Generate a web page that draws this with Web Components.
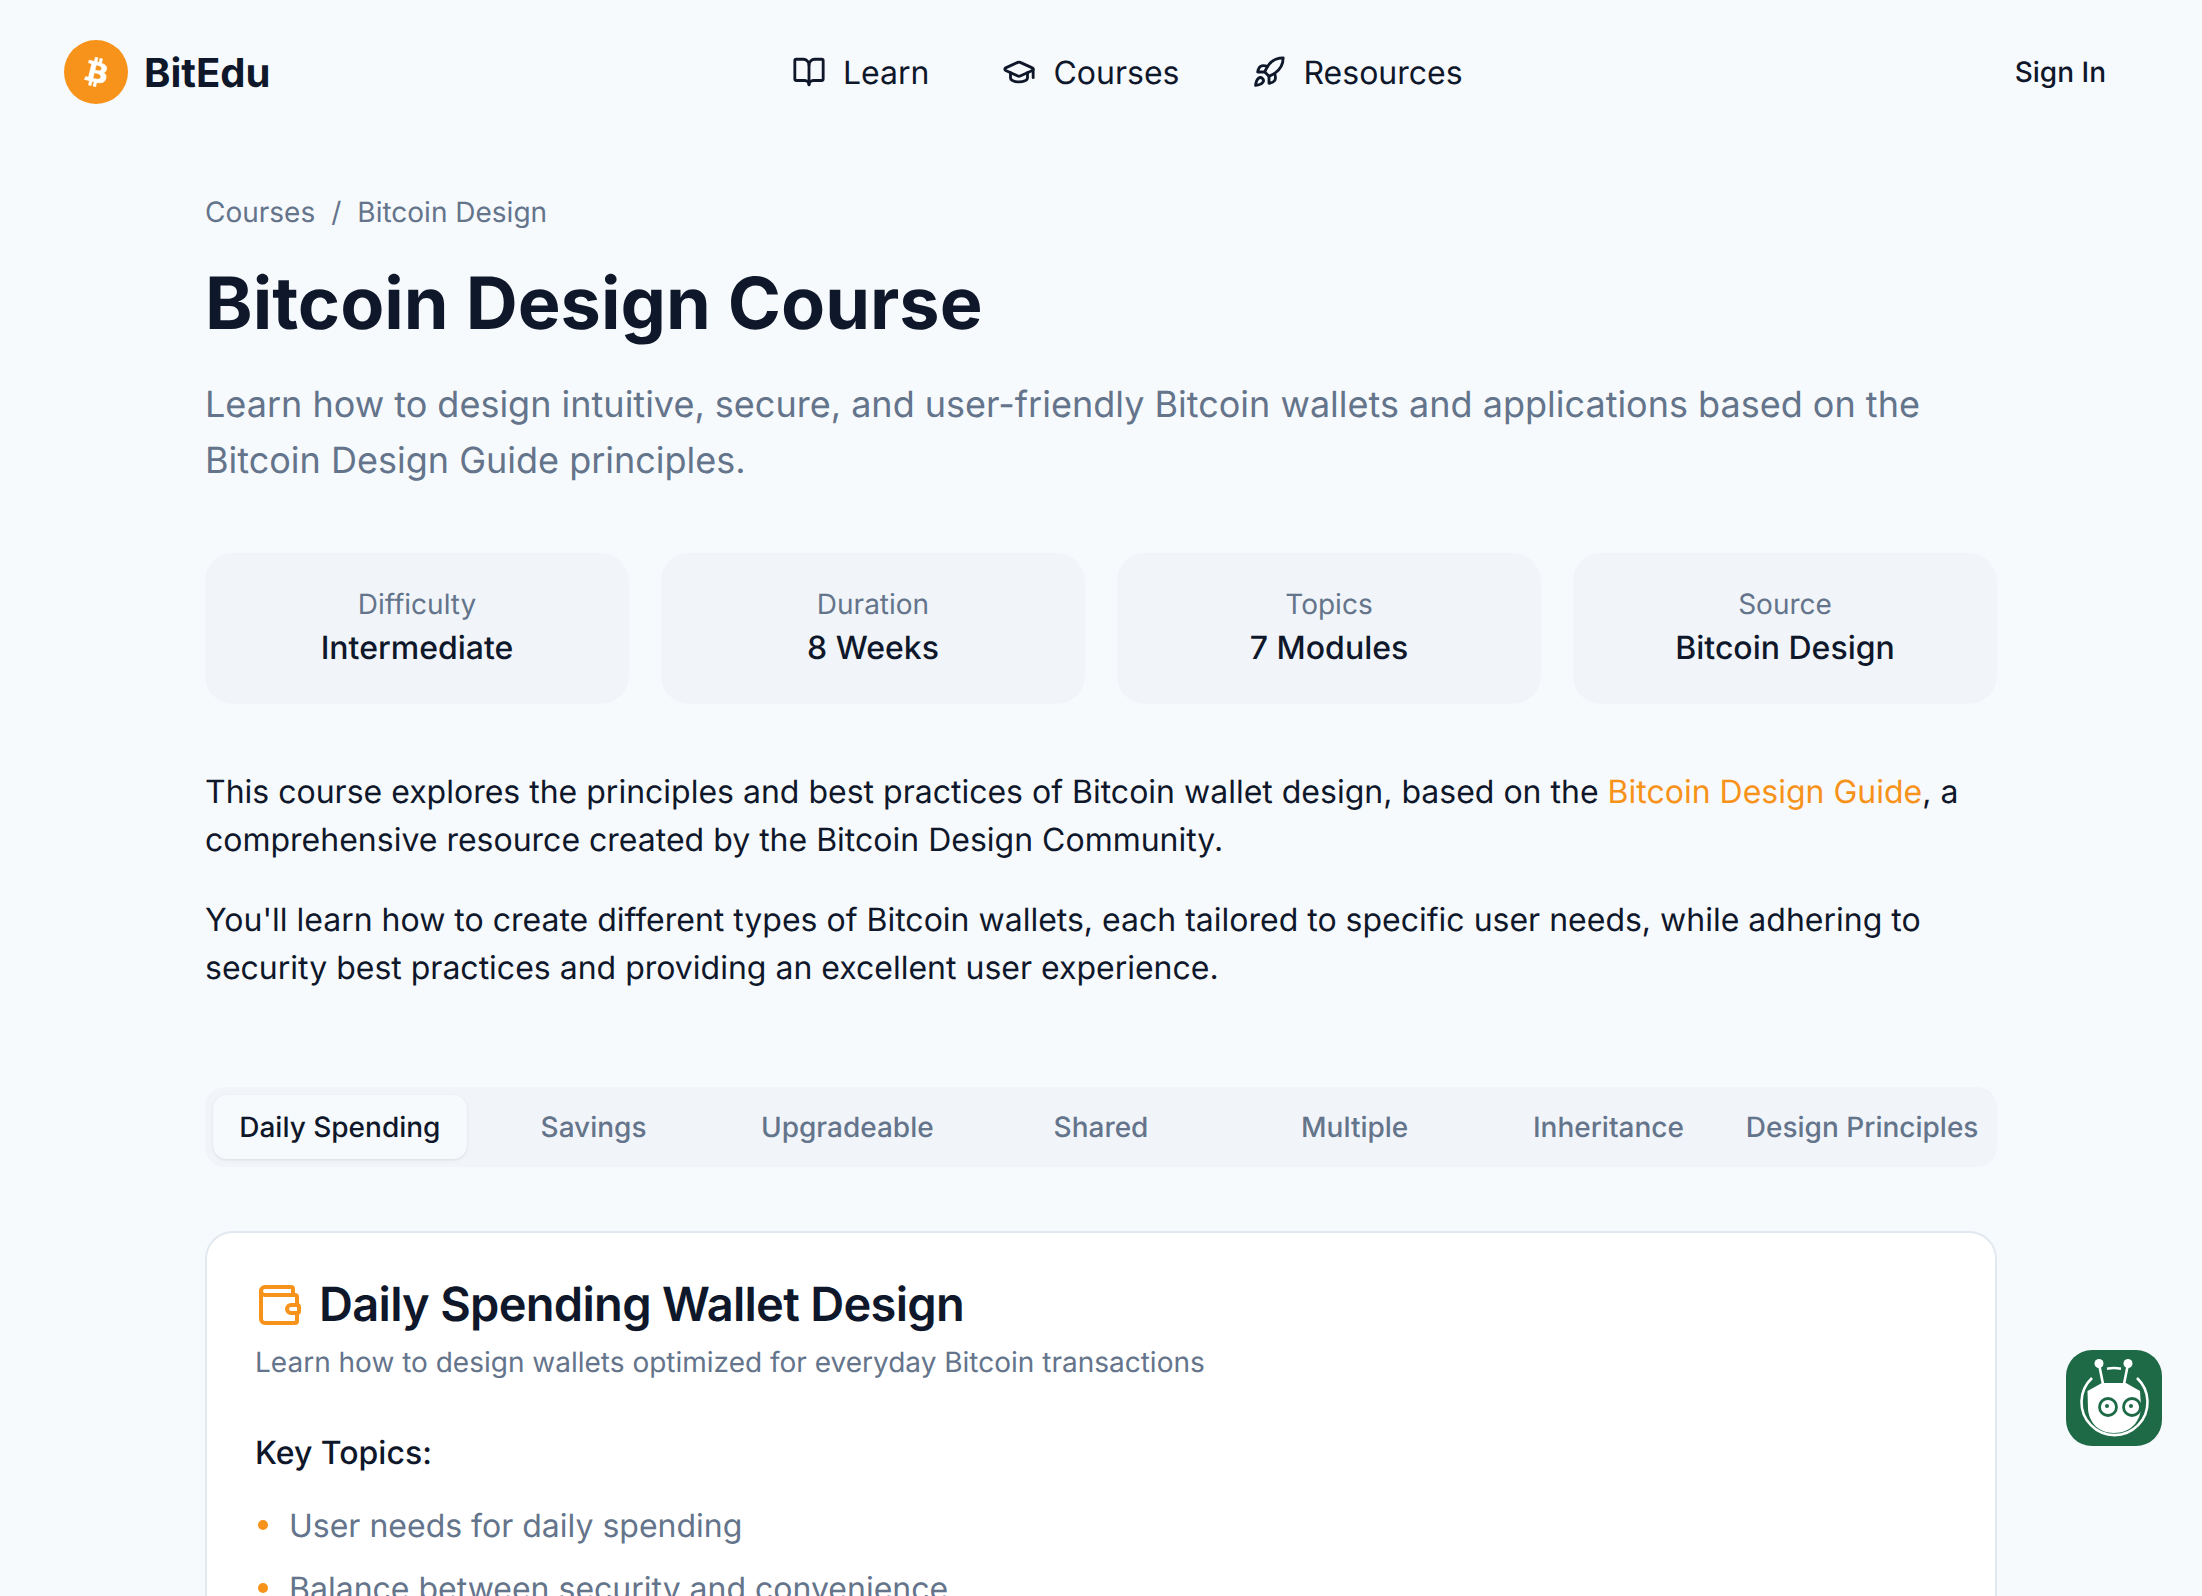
<!DOCTYPE html>
<html lang="en">
<head>
<meta charset="utf-8">
<title>Bitcoin Design Course</title>
<style>
html, body { margin: 0; height: 1596px; overflow: hidden; background: #f7fafd; }
body { font-family: Inter, "Noto Sans", sans-serif; color: #0f172a; text-rendering: geometricPrecision; }
</style>
</head>
<body>
<site-header></site-header>
<course-page>
  <bread-crumbs></bread-crumbs>
  <h1 slot="title">Bitcoin Design Course</h1>
  <span slot="lead">Learn how to design intuitive, secure, and user-friendly Bitcoin wallets and applications based on the Bitcoin Design Guide principles.</span>
  <stat-grid slot="stats">
    <stat-card label="Difficulty" value="Intermediate"></stat-card>
    <stat-card label="Duration" value="8 Weeks"></stat-card>
    <stat-card label="Topics" value="7 Modules"></stat-card>
    <stat-card label="Source" value="Bitcoin Design"></stat-card>
  </stat-grid>
  <intro-text slot="intro"></intro-text>
  <tab-bar slot="tabs"></tab-bar>
  <topic-card slot="card"></topic-card>
</course-page>
<bot-button></bot-button>

<script>
const ICONS = {
    book: '<path d="M12 7v14"/><path d="M3 18a1 1 0 0 1-1-1V4a1 1 0 0 1 1-1h5a4 4 0 0 1 4 4 4 4 0 0 1 4-4h5a1 1 0 0 1 1 1v13a1 1 0 0 1-1 1h-6a3 3 0 0 0-3 3 3 3 0 0 0-3-3z"/>',
    cap: '<path d="M21.42 10.922a1 1 0 0 0-.019-1.838L12.83 5.18a2 2 0 0 0-1.66 0L2.6 9.08a1 1 0 0 0 0 1.832l8.57 3.908a2 2 0 0 0 1.66 0z"/><path d="M22 10v6"/><path d="M6 12.5V16a6 3 0 0 0 12 0v-3.5"/>',
    rocket: '<path d="M4.5 16.5c-1.5 1.26-2 5-2 5s3.74-.5 5-2c.71-.84.7-2.13-.09-2.91a2.18 2.18 0 0 0-2.91-.09z"/><path d="m12 15-3-3a22 22 0 0 1 2-3.95A12.88 12.88 0 0 1 22 2c0 2.72-.78 7.5-6 11a22.35 22.35 0 0 1-4 2z"/><path d="M9 12H4s.55-3.03 2-4c1.62-1.08 5 0 5 0"/><path d="M12 15v5s3.03-.55 4-2c1.08-1.62 0-5 0-5"/>',
    wallet: '<path d="M19 7V4a1 1 0 0 0-1-1H5a2 2 0 0 0 0 4h15a1 1 0 0 1 1 1v4h-3a2 2 0 0 0 0 4h3a1 1 0 0 0 1-1v-2a1 1 0 0 0-1-1"/><path d="M3 5v14a2 2 0 0 0 2 2h15a1 1 0 0 0 1-1v-4"/>'
};

function icon(name, size) {
    return `<svg width="${size}" height="${size}" viewBox="0 0 24 24" fill="none" stroke="currentColor" stroke-width="2" stroke-linecap="round" stroke-linejoin="round">${ICONS[name]}</svg>`;
}

class SiteHeader extends HTMLElement {
    constructor() {
        super();
        this.attachShadow({ mode: 'open' }).innerHTML = `
        <style>
            :host { display: grid; grid-template-columns: 728px auto 1fr; align-items: center; height: 144px; padding: 0 96px 0 64px; box-sizing: border-box; }
            .logo { display: flex; align-items: center; gap: 16px; font-size: 40px; font-weight: 700; }
            nav { display: flex; gap: 73px; }
            a { display: flex; align-items: center; gap: 17px; font-size: 32px; color: #0f172a; }
            svg { display: block; }
            .sign { justify-self: end; font-size: 28px; font-weight: 500; }
        </style>
        <div class="logo">
            <svg width="64" height="64" viewBox="0 0 32 32"><circle cx="16" cy="16" r="16" fill="#f7931a"/><g transform="translate(16 16) scale(.74) translate(-16 -16)"><path fill="#fff" stroke="#fff" stroke-width=".4" d="M23.189 14.02c.314-2.096-1.283-3.223-3.465-3.975l.708-2.84-1.728-.43-.69 2.765c-.454-.114-.92-.22-1.385-.326l.695-2.783L15.596 6l-.708 2.839c-.376-.086-.746-.17-1.104-.26l.002-.009-2.384-.595-.46 1.846s1.283.294 1.256.312c.7.175.826.638.805 1.006l-.806 3.235c.048.012.11.03.18.057l-.183-.045-1.13 4.532c-.086.212-.303.531-.793.41.018.025-1.256-.313-1.256-.313l-.858 1.978 2.25.561c.418.105.828.215 1.231.318l-.715 2.872 1.727.43.708-2.84c.472.127.93.245 1.378.357l-.706 2.828 1.728.43.715-2.866c2.948.558 5.164.333 6.097-2.333.752-2.146-.037-3.385-1.588-4.192 1.13-.26 1.98-1.003 2.207-2.538zm-3.95 5.538c-.533 2.147-4.148.986-5.32.695l.95-3.805c1.172.293 4.929.872 4.37 3.11zm.535-5.569c-.487 1.953-3.495.96-4.47.717l.86-3.45c.975.243 4.118.696 3.61 2.733z"/></g></svg>
            <span>BitEdu</span>
        </div>
        <nav>
            <a>${icon('book', 34)}Learn</a>
            <a>${icon('cap', 34)}Courses</a>
            <a>${icon('rocket', 34)}Resources</a>
        </nav>
        <div class="sign">Sign In</div>`;
    }
}

class CoursePage extends HTMLElement {
    constructor() {
        super();
        this.attachShadow({ mode: 'open' }).innerHTML = `
        <style>
            :host { display: block; width: 1792px; margin: 0 auto; padding-top: 50px; }
            ::slotted(h1) { margin: 31px 0 0; font-size: 72px; line-height: 86px; font-weight: 700; color: #0f172a; }
            .lead { margin-top: 29px; font-size: 36px; line-height: 56px; color: #64748b; }
            .stats { margin-top: 65px; }
            .intro { margin-top: 64px; }
            .tabs { margin-top: 95px; }
            .card { margin-top: 64px; }
        </style>
        <slot></slot>
        <slot name="title"></slot>
        <div class="lead"><slot name="lead"></slot></div>
        <div class="stats"><slot name="stats"></slot></div>
        <div class="intro"><slot name="intro"></slot></div>
        <div class="tabs"><slot name="tabs"></slot></div>
        <div class="card"><slot name="card"></slot></div>`;
    }
}

class BreadCrumbs extends HTMLElement {
    constructor() {
        super();
        this.attachShadow({ mode: 'open' }).innerHTML = `
        <style>
            :host { display: flex; gap: 16px; font-size: 28px; line-height: 36px; color: #64748b; }
        </style>
        <span>Courses</span><span>/</span><span>Bitcoin Design</span>`;
    }
}

class StatGrid extends HTMLElement {
    constructor() {
        super();
        this.attachShadow({ mode: 'open' }).innerHTML = `
        <style>
            :host { display: grid; grid-template-columns: repeat(4, 1fr); gap: 32px; }
        </style>
        <slot></slot>`;
    }
}

class StatCard extends HTMLElement {
    constructor() {
        super();
        this.attachShadow({ mode: 'open' }).innerHTML = `
        <style>
            :host { display: flex; flex-direction: column; align-items: center; justify-content: center; height: 151px; padding-bottom: 3px; box-sizing: border-box; background: #f1f5f9; border-radius: 28px; }
            .l { font-size: 28px; line-height: 40px; color: #64748b; }
            .v { margin-top: 2px; font-size: 32px; line-height: 44px; font-weight: 500; color: #0f172a; }
        </style>
        <div class="l">${this.getAttribute('label')}</div>
        <div class="v">${this.getAttribute('value')}</div>`;
    }
}

class IntroText extends HTMLElement {
    constructor() {
        super();
        this.attachShadow({ mode: 'open' }).innerHTML = `
        <style>
            :host { display: block; font-size: 32px; line-height: 48px; color: #0f172a; }
            p { margin: 0 0 32px; }
            p:last-child { margin-bottom: 0; }
            a { color: #f7931a; }
        </style>
        <p>This course explores the principles and best practices of Bitcoin wallet design, based on the <a>Bitcoin Design Guide</a>, a<br>comprehensive resource created by the Bitcoin Design Community.</p>
        <p>You'll learn how to create different types of Bitcoin wallets, each tailored to specific user needs, while adhering to security best practices and providing an excellent user experience.</p>`;
    }
}

class TabBar extends HTMLElement {
    constructor() {
        super();
        const names = ['Daily Spending', 'Savings', 'Upgradeable', 'Shared', 'Multiple', 'Inheritance', 'Design Principles'];
        this.attachShadow({ mode: 'open' }).innerHTML = `
        <style>
            :host { display: grid; grid-template-columns: repeat(7, 1fr); height: 80px; padding: 8px; box-sizing: border-box; background: #f1f5f9; border-radius: 20px; }
            div { display: flex; align-items: center; justify-content: center; white-space: nowrap; font-size: 28px; font-weight: 500; color: #64748b; border-radius: 14px; }
            .on { background: #f7fafd; color: #0f172a; box-shadow: 0 1px 3px rgba(15, 23, 42, .1); }
        </style>
        ${names.map((n, i) => `<div class="${i ? '' : 'on'}">${n}</div>`).join('')}`;
    }
}

class TopicCard extends HTMLElement {
    constructor() {
        super();
        this.attachShadow({ mode: 'open' }).innerHTML = `
        <style>
            :host { display: block; background: #fff; border: 2px solid #e2e8f0; border-radius: 28px; padding: 44px 48px; box-sizing: border-box; }
            .title { display: flex; align-items: center; gap: 16px; }
            svg { color: #f7931a; display: block; }
            h2 { margin: 0; font-size: 47px; line-height: 56px; font-weight: 600; letter-spacing: -0.7px; }
            .sub { font-size: 28px; line-height: 40px; color: #64748b; margin-top: 9px; }
            h3 { margin: 49px 0 0; font-size: 32px; line-height: 44px; font-weight: 500; }
            ul { list-style: none; margin: 22px 0 0; padding: 0; }
            li { display: flex; align-items: center; gap: 21px; height: 56px; margin-bottom: 7px; font-size: 32px; color: #64748b; }
            li::before { content: ""; width: 10px; height: 10px; margin-left: 3px; border-radius: 50%; background: #f7931a; }
        </style>
        <div class="title">${icon('wallet', 48)}<h2>Daily Spending Wallet Design</h2></div>
        <div class="sub">Learn how to design wallets optimized for everyday Bitcoin transactions</div>
        <h3>Key Topics:</h3>
        <ul><li>User needs for daily spending</li><li>Balance between security and convenience</li></ul>`;
    }
}

class BotButton extends HTMLElement {
    constructor() {
        super();
        this.attachShadow({ mode: 'open' }).innerHTML = `
        <style>
            :host { position: fixed; left: 2066px; top: 1350px; width: 96px; height: 96px; }
            svg { display: block; }
        </style>
        <svg width="96" height="96" viewBox="0 0 96 96">
            <rect width="96" height="96" rx="26" fill="#1e6a47"/>
            <path d="M41 18.8a33 33 0 0 1 14 0M26 28a33 33 0 1 0 45 0" fill="none" stroke="#fff" stroke-width="2.6"/>
            <circle cx="33" cy="13.5" r="4.5" fill="#fff"/><circle cx="62" cy="13.5" r="4.5" fill="#fff"/>
            <path d="M33 14l4 20M62 14l-4 20" stroke="#fff" stroke-width="2.6"/>
            <path d="M36 33h24l14 8 1 15c0 16-11 27-27 27s-25-11-26-24l-.5-18z" fill="#fff"/>
            <circle cx="42" cy="57" r="8.5" fill="#fff" stroke="#1e6a47" stroke-width="2.8"/><circle cx="41" cy="56" r="2" fill="#1e6a47"/>
            <circle cx="66" cy="57" r="8.5" fill="#fff" stroke="#1e6a47" stroke-width="2.8"/><circle cx="65" cy="56" r="2" fill="#1e6a47"/>
        </svg>`;
    }
}

customElements.define('site-header', SiteHeader);
customElements.define('course-page', CoursePage);
customElements.define('bread-crumbs', BreadCrumbs);
customElements.define('stat-grid', StatGrid);
customElements.define('stat-card', StatCard);
customElements.define('intro-text', IntroText);
customElements.define('tab-bar', TabBar);
customElements.define('topic-card', TopicCard);
customElements.define('bot-button', BotButton);
</script>
</body>
</html>
